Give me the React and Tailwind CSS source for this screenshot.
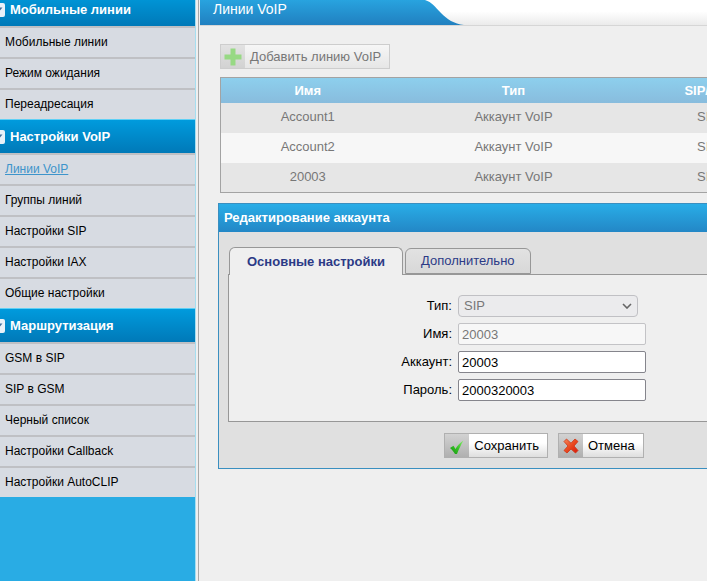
const MENU = [
  {
    title: "Мобильные линии",
    items: ["Мобильные линии", "Режим ожидания", "Переадресация"],
  },
  {
    title: "Настройки VoIP",
    items: ["Линии VoIP", "Группы линий", "Настройки SIP", "Настройки IAX", "Общие настройки"],
  },
  {
    title: "Маршрутизация",
    items: ["GSM в SIP", "SIP в GSM", "Черный список", "Настройки Callback", "Настройки AutoCLIP"],
  },
];

const ACCOUNTS = [
  { name: "Account1", type: "Аккаунт VoIP", protocol: "SIP" },
  { name: "Account2", type: "Аккаунт VoIP", protocol: "SIP" },
  { name: "20003", type: "Аккаунт VoIP", protocol: "SIP" },
];

const PlusIcon = () => (
  <svg viewBox="0 0 18 18" className="h-[18px] w-[18px]" aria-hidden="true">
    <path d="M6.5.5h5v6h6v5h-6v6h-5v-6h-6v-5h6z" fill="#97d984" />
  </svg>
);

const CheckIcon = () => (
  <svg viewBox="0 0 16 16" className="mt-0.5 h-4 w-4" aria-hidden="true">
    <defs>
      <linearGradient id="check-fill" x1="1" y1="0" x2="0" y2="1">
        <stop offset="0" stopColor="#8af070" />
        <stop offset="0.5" stopColor="#35c224" />
        <stop offset="1" stopColor="#169312" />
      </linearGradient>
    </defs>
    <path d="M1 9l3.5-2.2L6.5 10C8.5 6.500 10.500 4 14.500 1.500C12 5.500 10 10 8 15H6C4.500 12.500 3 10.500 1 9z" fill="url(#check-fill)" />
  </svg>
);

const CrossIcon = () => (
  <svg viewBox="0 0 16 16" className="h-4 w-4" aria-hidden="true">
    <defs>
      <linearGradient id="cross-fill" x1="0" y1="0" x2="1" y2="1">
        <stop offset="0" stopColor="#f5885c" />
        <stop offset="0.5" stopColor="#e9481f" />
        <stop offset="1" stopColor="#d8160c" />
      </linearGradient>
    </defs>
    <path
      d="M3.500 1L8 5.200L12 1L15 3.500L11 8L15 12.500L12.500 15L8 11L4 15L1 12.500L5 8L1 3.500z"
      fill="url(#cross-fill)"
      stroke="#cf3313"
      strokeWidth="0.8"
      strokeLinejoin="round"
    />
  </svg>
);

const MenuSection = ({ title, items, active }) => (
  <section>
    <h2 className="flex h-[34px] items-center border-t border-[#5fd0f5] bg-linear-to-b from-[#009bdd] to-[#0079b8] text-[13px] font-bold text-white">
      <svg viewBox="0 0 14 14" className="-ml-[9px] h-3.5 w-3.5 shrink-0" aria-hidden="true">
        <rect width="14" height="14" rx="2" fill="#e9f1f8" />
        <path d="M2.500 4.500h9L7 10z" fill="#44709c" />
      </svg>
      <span className="ml-[5px]">{title}</span>
    </h2>
    <ul>
      {items.map((item) => (
        <li
          key={item}
          className="flex h-[31px] items-center border-t-2 border-[#bfc0c4] bg-[#d7dbe2] pb-0.5 pl-[5px] text-[12px]"
        >
          <a href="#" className={item === active ? "text-[#3d94cb] underline" : "text-black"}>
            {item}
          </a>
        </li>
      ))}
    </ul>
  </section>
);

const Sidebar = () => (
  <aside className="w-[196px] shrink-0 border-r border-[#a5def0] bg-[#29ace4]">
    <nav className="-mt-2">
      {MENU.map((section) => (
        <MenuSection key={section.title} {...section} active="Линии VoIP" />
      ))}
    </nav>
  </aside>
);

const PageHeader = () => (
  <header className="flex h-[26px] border-b border-[#d6d6d6] bg-linear-to-b from-white from-45% to-[#ebebeb]">
    <h1 className="w-[224px] bg-linear-to-b from-[#28a3df] to-[#2180c0] pl-[13px] text-[14px] leading-[19px] text-white">
      Линии VoIP
    </h1>
    <svg viewBox="0 0 40 25" className="h-[25px] w-10" aria-hidden="true">
      <defs>
        <linearGradient id="tab-fill" x1="0" y1="0" x2="0" y2="1">
          <stop offset="0" stopColor="#28a3df" />
          <stop offset="1" stopColor="#2180c0" />
        </linearGradient>
      </defs>
      <path d="M0 0h1c7 2 10 7 16 13c6 6 13 11 23 12H0z" fill="url(#tab-fill)" />
    </svg>
  </header>
);

const IconButton = ({ icon, children, muted = false }) => (
  <button
    type="button"
    className={`flex h-[25px] items-stretch border bg-linear-to-b text-[13px] ${
      muted
        ? "border-[#cdcdcd] from-[#f6f6f6] to-[#e6e6e6] text-[#777777]"
        : "border-[#b0b0b0] from-white from-40% to-[#dedede] text-black"
    }`}
  >
    <span
      className={`flex w-6 items-center justify-center bg-linear-to-b ${
        muted ? "from-[#e2e2e2] to-[#d2d2d2]" : "from-[#d2d2d2] to-[#b0b0b0]"
      }`}
    >
      {icon}
    </span>
    <span className="self-center pr-2 pl-[5px]">{children}</span>
  </button>
);

const AccountsTable = () => (
  <table className="w-full table-fixed border-collapse border border-[#a3a3a3] text-center text-[13px] text-[#777777]">
    <colgroup>
      <col className="w-[174px]" />
      <col className="w-[238px]" />
      <col className="w-[150px]" />
      <col />
    </colgroup>
    <thead>
      <tr className="h-[25px] bg-linear-to-b from-[#8dcfed] to-[#88bcdd] text-white">
        <th>Имя</th>
        <th>Тип</th>
        <th>SIP/IAX</th>
        <th></th>
      </tr>
    </thead>
    <tbody>
      {ACCOUNTS.map((account) => (
        <tr key={account.name} className="h-[30px] odd:bg-[#e6e6e6] even:bg-[#f7f7f7]">
          <td className="pb-0.5">{account.name}</td>
          <td className="pb-0.5">{account.type}</td>
          <td className="pb-0.5">{account.protocol}</td>
          <td></td>
        </tr>
      ))}
    </tbody>
  </table>
);

const TextField = ({ id, label, value, disabled = false }) => (
  <>
    <label htmlFor={id} className="text-right">
      {label}
    </label>
    <input
      id={id}
      type="text"
      defaultValue={value}
      disabled={disabled}
      className="h-[22px] w-[188px] rounded-xs border border-[#85858c] bg-white px-[3px] text-black disabled:border-[#c3c3c6] disabled:bg-[#f7f7f7] disabled:text-[#777777]"
    />
  </>
);

const EditAccount = () => (
  <section className="border border-[#3a8fc0] bg-[#e0e0e0]">
    <h2 className="h-7 bg-linear-to-b from-[#29ade7] to-[#2387c6] pl-[5px] text-[13px] leading-7 font-bold text-white">
      Редактирование аккаунта
    </h2>
    <div className="px-[9px] pt-[15px] pb-2.5">
      <div role="tablist" className="flex items-end gap-0.5 pl-px">
        <button
          type="button"
          role="tab"
          aria-selected="true"
          className="relative z-10 -mb-px h-7 rounded-t-md border border-b-0 border-[#979797] bg-[#efefef] px-[17px] text-[13px] font-bold text-[#2b3a86]"
        >
          Основные настройки
        </button>
        <button
          type="button"
          role="tab"
          aria-selected="false"
          className="h-[26px] rounded-t-md border border-[#979797] bg-linear-to-b from-[#e2e2e2] to-[#d8d8d8] px-[15px] text-[13px] text-[#2b3a86]"
        >
          Дополнительно
        </button>
      </div>
      <form className="grid h-[148px] grid-cols-[223px_1fr] content-start items-center gap-x-1.5 gap-y-1.5 border border-[#979797] bg-[#efefef] pt-5 text-[13px]">
        <label htmlFor="type" className="text-right">
          Тип:
        </label>
        <div className="relative w-[180px]">
          <select
            id="type"
            disabled
            className="block h-[22px] w-full appearance-none rounded-sm border border-[#c0c0c4] bg-[#ebebed] px-[5px] text-[#777777]"
          >
            <option>SIP</option>
          </select>
          <svg viewBox="0 0 10 6" className="absolute top-2 right-1.5 h-1.5 w-2.5" aria-hidden="true">
            <path d="M1 1L5 5L9 1" fill="none" stroke="#666666" strokeWidth="1.6" />
          </svg>
        </div>
        <TextField id="name" label="Имя:" value="20003" disabled />
        <TextField id="account" label="Аккаунт:" value="20003" />
        <TextField id="password" label="Пароль:" value="2000320003" />
      </form>
      <div className="mt-[11px] flex justify-center gap-2.5">
        <IconButton icon={<CheckIcon />}>Сохранить</IconButton>
        <IconButton icon={<CrossIcon />}>Отмена</IconButton>
      </div>
    </div>
  </section>
);

const App = () => (
  <div className="flex min-h-screen overflow-hidden bg-[#efefef] font-['Liberation_Sans',Arial,sans-serif] text-black">
    <Sidebar />
    <div className="ml-0.5 min-w-0 flex-1 border-l border-[#a8a8a8] pl-px">
      <PageHeader />
      <main className="min-w-[670px] pt-[18px] pl-[18px]">
        <div className="mb-2 flex pl-0.5">
          <IconButton muted icon={<PlusIcon />}>
            Добавить линию VoIP
          </IconButton>
        </div>
        <div className="mb-2.5 pl-0.5">
          <AccountsTable />
        </div>
        <EditAccount />
      </main>
    </div>
  </div>
);

export default App;
